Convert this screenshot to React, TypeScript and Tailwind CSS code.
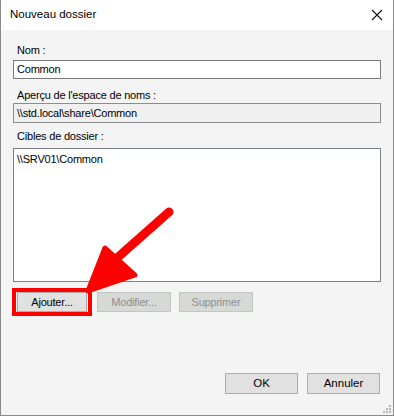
import React from "react";

const font = { fontFamily: '"Liberation Sans", Arial, sans-serif' };

function Btn({ label, disabled, w }: { label: string; disabled?: boolean; w: string }) {
  return (
    <div
      className={
        "h-[20px] flex items-center justify-center border text-[11px] " +
        w +
        " " +
        (disabled
          ? "bg-[#d7d9d7] border-[#c3c4c3] text-[#8e8e8e]"
          : "bg-[#e1e1e1] border-[#adadad] text-black")
      }
    >
      {label}
    </div>
  );
}

export default function App() {
  return (
    <div
      className="relative w-[394px] h-[416px] flex flex-col bg-[#f4f4f4] border-l border-r border-b border-[#8a8a8a] overflow-hidden"
      style={font}
    >
      {/* title bar */}
      <div className="h-[30px] bg-white flex items-center justify-between pl-[9px] pr-[9px] shrink-0">
        <span className="text-[11.5px] text-black">Nouveau dossier</span>
        <svg width="12" height="12" viewBox="0 0 12 12" className="mr-[1px]">
          <path d="M1 1 L11 11 M11 1 L1 11" stroke="#111" strokeWidth="1.1" fill="none" />
        </svg>
      </div>

      <div className="flex flex-col px-[12px] text-[11px] tracking-[-0.2px] text-black">
        <div className="mt-[12px] h-[16px] leading-[16px] pl-[4px]">Nom :</div>
        <div className="mt-[2px] h-[19px] border border-[#7a7a7a] bg-white flex items-center pl-[3px]">
          Common
        </div>

        <div className="mt-[8px] h-[16px] leading-[16px] pl-[4px]">Aperçu de l'espace de noms :</div>
        <div className="h-[20px] border border-[#8c8c8c] bg-[#f0f0f0] flex items-center pl-[3px]">
          \\std.local\share\Common
        </div>

        <div className="mt-[5px] h-[16px] leading-[16px] pl-[4px]">Cibles de dossier :</div>
        <div className="mt-[4px] h-[134px] border border-[#7a7f8a] bg-white pl-[3px] pt-[2px]">
          \\SRV01\Common
        </div>

        <div className="mt-[10px] flex items-center pl-[4px] gap-[10px]">
          <div className="relative">
            <Btn label="Ajouter..." w="w-[70px]" />
            <div className="absolute left-[-5px] top-[-4px] right-[-5px] bottom-[-4px] border-[4px] border-[#ff0000]" />
          </div>
          <div>
            <Btn label="Modifier..." disabled w="w-[74px]" />
          </div>
          <div className="ml-[-2px]">
            <Btn label="Supprimer" disabled w="w-[74px]" />
          </div>
        </div>
      </div>

      <div className="flex-1" />

      <div className="flex justify-end gap-[9px] pr-[13px] pb-[21px] text-[11.5px]">
        <div className="w-[73px] h-[21px] flex items-center justify-center bg-[#e1e1e1] border border-[#adadad]">OK</div>
        <div className="w-[73px] h-[21px] flex items-center justify-center bg-[#e1e1e1] border border-[#adadad]">Annuler</div>
      </div>

      {/* resize grip */}
      <svg className="absolute right-[2px] bottom-[2px]" width="8" height="8" viewBox="0 0 8 8">
        <rect x="6" y="0" width="2" height="2" fill="#b8b8b8" />
        <rect x="3" y="3" width="2" height="2" fill="#b8b8b8" />
        <rect x="6" y="3" width="2" height="2" fill="#b8b8b8" />
        <rect x="0" y="6" width="2" height="2" fill="#b8b8b8" />
        <rect x="3" y="6" width="2" height="2" fill="#b8b8b8" />
        <rect x="6" y="6" width="2" height="2" fill="#b8b8b8" />
      </svg>

      {/* red annotation arrow */}
      <svg className="absolute left-0 top-0 pointer-events-none" width="394" height="416" viewBox="0 0 394 416">
        <line x1="168" y1="212" x2="116" y2="258" stroke="#ff0000" strokeWidth="9" strokeLinecap="round" />
        <polygon
          points="104,248 134,275 87,291"
          fill="#ff0000"
          stroke="#ff0000"
          strokeWidth="5"
          strokeLinejoin="round"
        />
      </svg>
    </div>
  );
}
